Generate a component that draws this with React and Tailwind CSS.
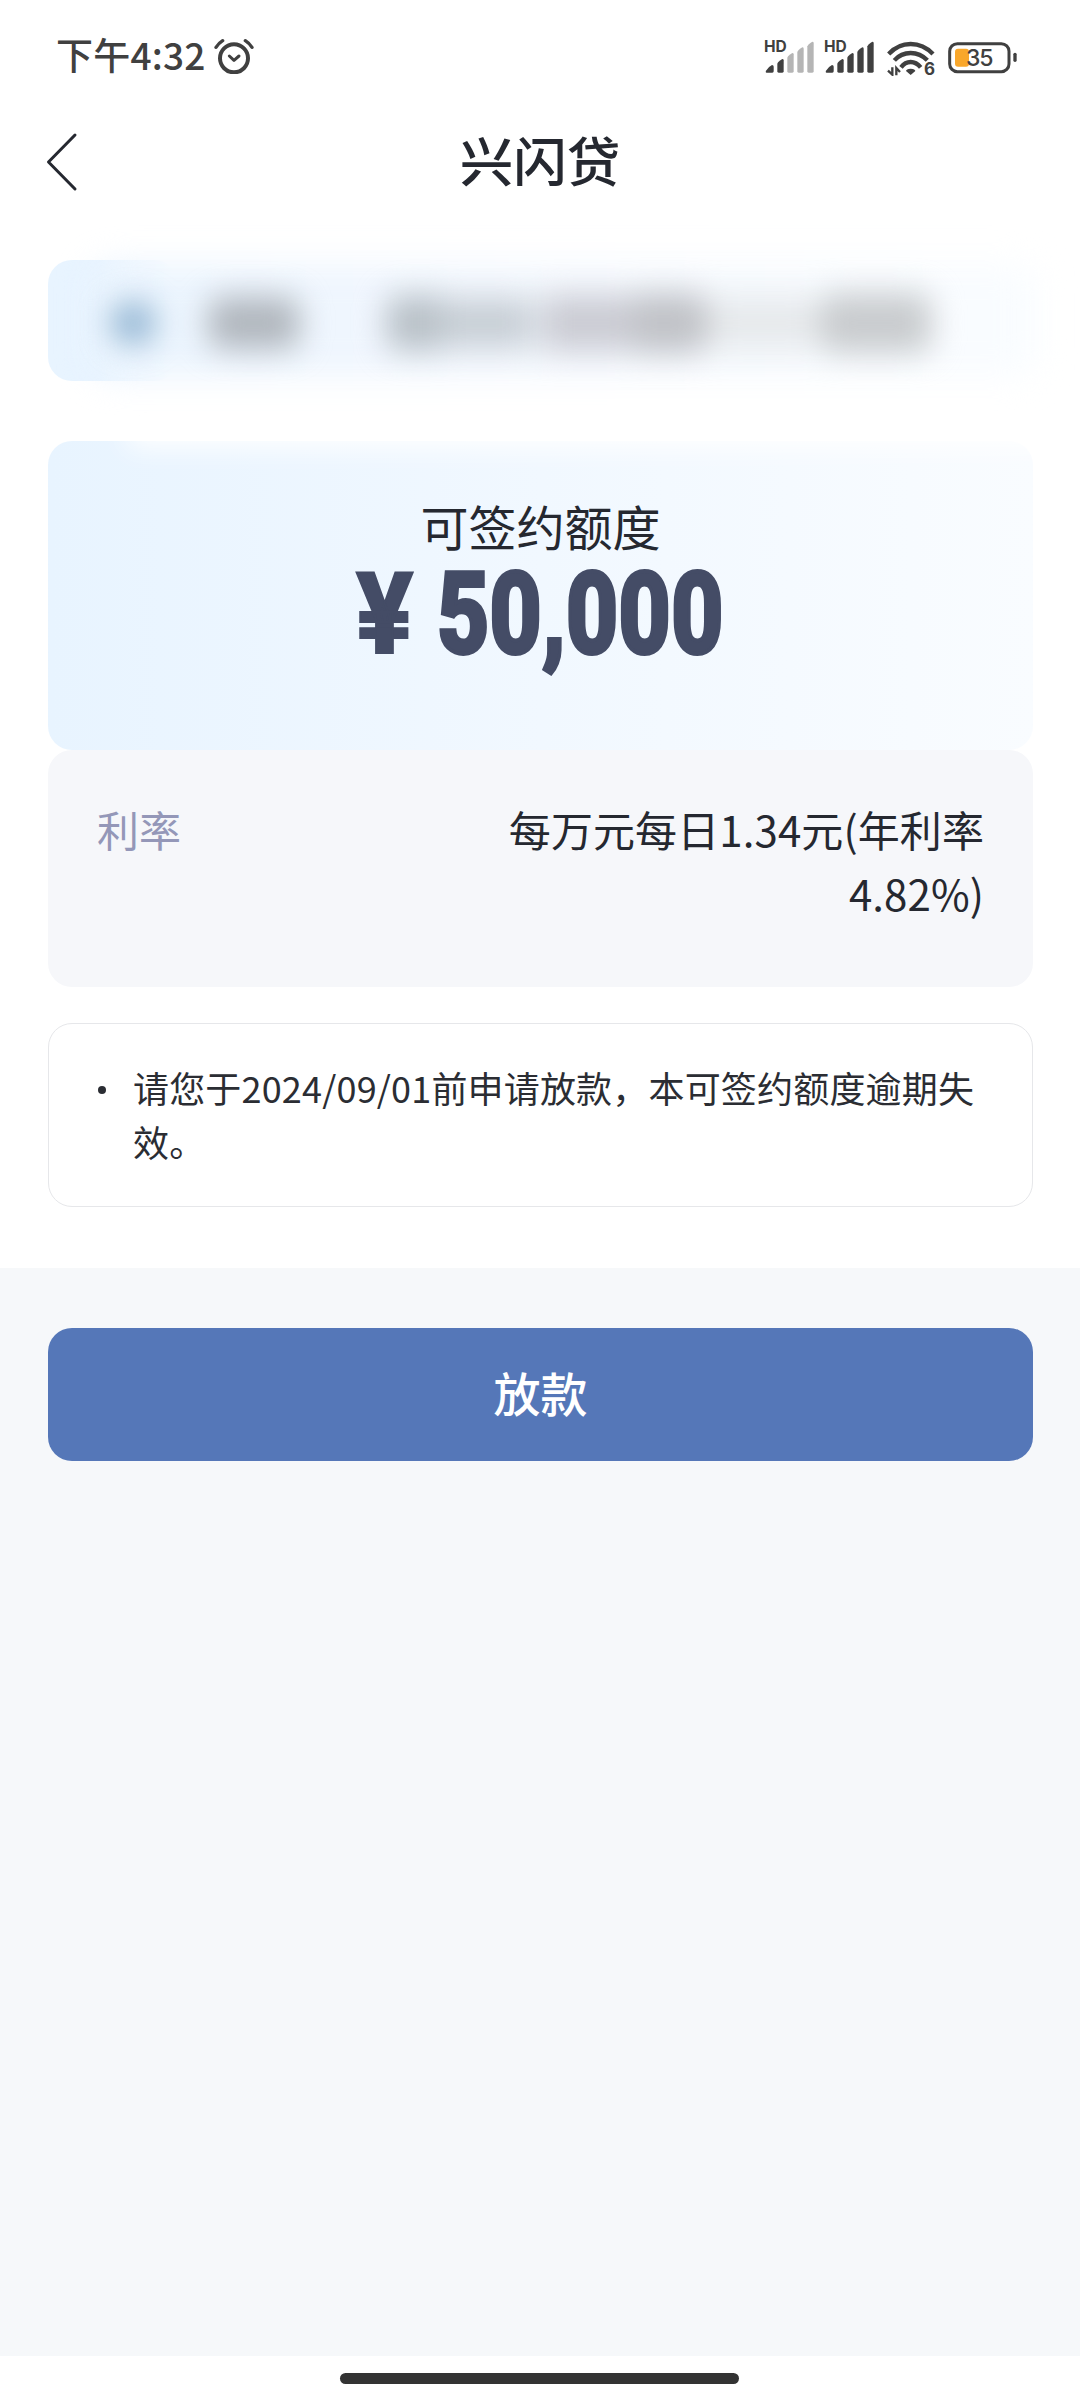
import React from 'react';

const rates = [
  { label: '利率', value: '每万元每日1.34元(年利率4.82%)' },
];

const notices = ['请您于2024/09/01前申请放款，本可签约额度逾期失效。'];

const AlarmIcon = () => (
  <svg className="w-[40px] h-[36px]" viewBox="0 0 120 108" fill="none" stroke="#404040" strokeLinecap="round" strokeLinejoin="round">
    <circle cx="60" cy="61" r="42" strokeWidth="12" />
    <path d="M46 54l14 13 15-13" strokeWidth="9" />
    <path d="M6 28C12 19 18 13 26 8" strokeWidth="10" />
    <path d="M114 28C108 19 102 13 94 8" strokeWidth="10" />
  </svg>
);

const SignalIcon = ({ level }) => {
  const bars = [
    { d: 'M7 95q-7 0-4-6q6-11 18-17q5 0 5 5v14q0 4-4 4z' },
    { d: 'M41 95q-4 0-4-4V68q2-6 15-14q4 0 4 4v33q0 4-4 4z' },
    { d: 'M71 95q-4 0-4-4V50q2-6 15-14q4 0 4 4v51q0 4-4 4z' },
    { d: 'M101 95q-4 0-4-4V33q2-6 15-14q4 0 4 4v68q0 4-4 4z' },
    { d: 'M131 95q-4 0-4-4V16q2-6 15-14q4 0 4 4v85q0 4-4 4z' },
  ];
  return (
    <div className="relative w-[50px] h-[34px]">
      <svg className="w-[50px] h-[34px]" viewBox="0 0 150 102">
        {bars.map((bar, i) => (
          <path key={i} d={bar.d} fill={i < level ? '#404040' : '#b5b5b5'} />
        ))}
      </svg>
      <span className="absolute left-[-1px] top-[-2px] text-[15.5px] leading-[16px] font-bold font-['Inter',sans-serif]">HD</span>
    </div>
  );
};

const WifiIcon = () => (
  <div className="relative w-[48px] h-[36px]">
    <svg className="w-[48px] h-[36px]" viewBox="0 0 144 108" fill="none" stroke="#404040" strokeWidth="13">
      <path d="M5 42Q33 12 71 12T138 42" />
      <path d="M22 61Q42 39 71 39T121 61" />
      <path d="M42 82Q54 66 71 66T101 82" />
      <path d="M71 86c9 0 14 4 14 7L71 105 57 93c0-3 5-7 14-7z" fill="#404040" stroke="none" />
      <path d="M16 82v22L3 92" strokeWidth="7" />
      <path d="M28 106V84l11 12" strokeWidth="7" />
    </svg>
    <span className="absolute right-0 bottom-0 text-[17px] leading-[13px] font-bold font-['Inter',sans-serif]">6</span>
  </div>
);

const BatteryIcon = () => (
  <div className="relative w-[70px] h-[32px]">
    <svg className="w-[70px] h-[32px]" viewBox="0 0 210 96">
      <rect x="5" y="5" width="178" height="84" rx="23" fill="none" stroke="#404040" strokeWidth="9" />
      <rect x="21" y="20" width="42" height="54" rx="9" fill="#f9a72b" />
      <rect x="196" y="32" width="10" height="28" rx="5" fill="#404040" />
    </svg>
    <span className="absolute left-[18px] top-[4px] text-[23px] leading-[24px] tracking-[-1.2px] font-medium font-['Inter',sans-serif]">35</span>
  </div>
);

const StatusBar = () => (
  <div className="h-[112px] pl-[56px] pr-[62px] flex items-center justify-between text-[#404040]">
    <div className="flex items-center">
      <span className="mt-[-3px] text-[37px] leading-none font-medium tracking-[0.2px]">下午4:32</span>
      <span className="ml-[8px]"><AlarmIcon /></span>
    </div>
    <div className="mt-[4px] flex items-center">
      <SignalIcon level={2} />
      <span className="ml-[10px]"><SignalIcon level={5} /></span>
      <span className="ml-[12px]"><WifiIcon /></span>
      <span className="ml-[13px]"><BatteryIcon /></span>
    </div>
  </div>
);

const Header = () => (
  <header className="h-[100px] px-[46px] grid grid-cols-[1fr_auto_1fr] items-center">
    <svg className="w-[32px] h-[60px]" viewBox="0 0 32 60" fill="none" stroke="#252830" strokeWidth="3" strokeLinecap="round" strokeLinejoin="round">
      <path d="M29 3L2.500 30L29 57" />
    </svg>
    <h1 className="mt-[-6px] text-[53.500px] leading-none font-medium text-[#252830]">兴闪贷</h1>
    <span />
  </header>
);

// account holder details stay obscured
const ObscuredAccount = () => (
  <section className="relative ml-[48px] mr-[47px] mt-[48px] h-[121px]">
    <div className="h-full w-[130px] rounded-[24px] bg-linear-to-r from-[#e8f4ff] via-[#e8f4ff] via-40% to-transparent" />
    <div className="absolute left-[44px] right-[-6px] top-[4px] bottom-[4px] rounded-[24px] bg-linear-to-r from-[#eaf4fe] via-[#f4f8fe] to-[#fafdff] blur-[16px]" />
    <div className="absolute inset-0 pl-[62px] pt-[4px] flex items-center blur-[15px]">
      <div className="w-[46px] h-[44px] rounded-full bg-[#96b8d4]" />
      <div className="ml-[52px] w-[92px] h-[52px] rounded-[16px] bg-[#b1b7be]" />
      <div className="ml-[86px] w-[54px] h-[56px] rounded-l-[16px] bg-[#b9c1c8]" />
      <div className="w-[92px] h-[50px] bg-[#c8cfd6]" />
      <div className="ml-[10px] w-[92px] h-[56px] bg-[#cbccd4]" />
      <div className="w-[74px] h-[60px] rounded-r-[16px] bg-[#c1c3c8]" />
      <div className="w-[112px] h-[50px] bg-[#e6e9ec]" />
      <div className="w-[112px] h-[60px] rounded-[16px] bg-[#c9cccf]" />
    </div>
  </section>
);

const QuotaCard = () => (
  <section className="relative ml-[48px] mr-[47px] mt-[60px] h-[309px] rounded-[24px] bg-linear-to-r from-[#e8f4ff] via-[#f1f8ff] to-[#f9fcff] flex flex-col items-center">
    <div className="absolute left-[80px] right-[-14px] top-[-30px] h-[36px] bg-white blur-[14px]" />
    <p className="mt-[54px] text-[48px] leading-[60px] text-[#252830]">可签约额度</p>
    <div className="mt-[5px] w-[370px] h-[110px] flex justify-between items-baseline font-['Roboto',sans-serif] font-extrabold text-[113px] leading-[110px] text-[#444c66] whitespace-nowrap">
      <span className="origin-left scale-x-[0.94] w-[60px] [-webkit-text-stroke:2px_#444c66]">¥</span>
      <span className="origin-left scale-x-[0.8] w-[289px] tracking-[0.6px] [-webkit-text-stroke:4px_#444c66]">50,000</span>
    </div>
  </section>
);

const RateCard = () => (
  <section className="ml-[48px] mr-[47px] h-[237px] rounded-[24px] bg-[#f6f7fa] px-[49px] pt-[47px]">
    {rates.map((item) => (
      <div key={item.label} className="flex justify-between text-[42px] leading-[64px]">
        <span className="text-[#9497b8]">{item.label}</span>
        <span className="w-[490px] text-right tracking-[0.1px] text-[#252830] break-all">{item.value}</span>
      </div>
    ))}
  </section>
);

const NoticeCard = () => (
  <section className="ml-[48px] mr-[47px] mt-[36px] h-[184px] rounded-[24px] border-[1.5px] border-[#e6e7ea] pl-[49px] pr-[40px] pt-[36px]">
    {notices.map((text) => (
      <div key={text} className="flex text-[36px] leading-[54px] text-[#2b2d33]">
        <span className="mt-[26px] mr-[27px] w-[8px] h-[8px] rounded-full bg-[#2b2d33] shrink-0" />
        <p className="w-[850px] tracking-[0.18px] [line-break:anywhere]">{text}</p>
      </div>
    ))}
  </section>
);

const App = () => (
  <div className="w-[1080px] h-[2400px] overflow-hidden flex flex-col bg-white font-['Noto_Sans_CJK_SC',sans-serif]">
    <StatusBar />
    <Header />
    <ObscuredAccount />
    <QuotaCard />
    <RateCard />
    <NoticeCard />

    <div className="mt-[61px] flex-1 bg-[#f6f8fa] pl-[48px] pr-[47px] pt-[60px]">
      <button className="w-full h-[133px] pb-[6px] rounded-[24px] bg-[#5577b8] text-white text-[47px] leading-none font-medium">
        放款
      </button>
    </div>

    <div className="h-[44px] pt-[17px] pr-[1px] flex justify-center bg-white">
      <div className="w-[399px] h-[11px] rounded-full bg-[#333333]" />
    </div>
  </div>
);

export default App;
